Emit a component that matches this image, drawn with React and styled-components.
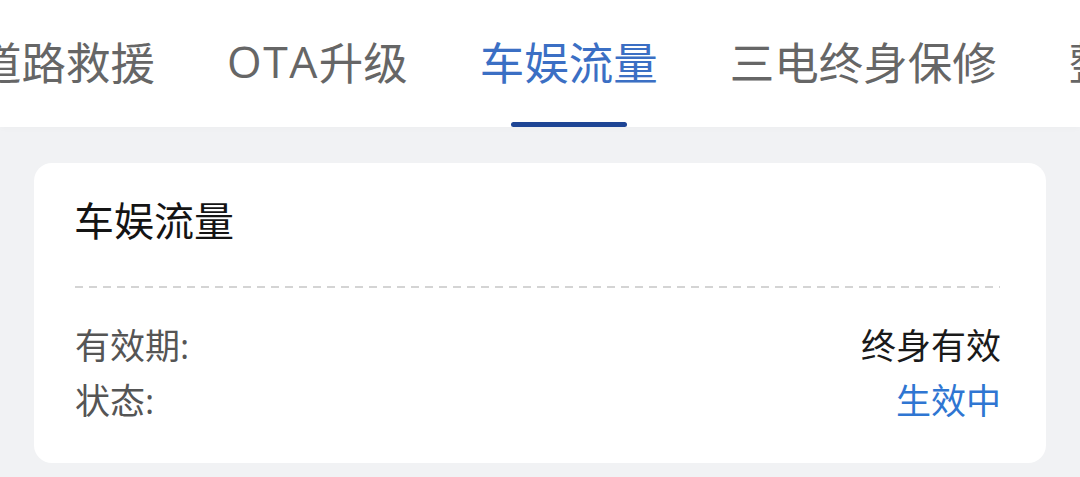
import React, { useState } from 'react';
import styled, { createGlobalStyle } from 'styled-components';

const GlobalStyle = createGlobalStyle`
  html, body {
    margin: 0;
    padding: 0;
    background: #f1f2f4;
  }
  body {
    font-family: "Open Sans", "Noto Sans CJK SC", sans-serif;
  }
`;

const Page = styled.div`
  width: 1080px;
  height: 477px;
  overflow: hidden;
  background: #f1f2f4;
`;

const TabBar = styled.div`
  height: 127px;
  background: #fff;
  overflow: hidden;
  box-shadow: 0 2px 6px rgba(0, 0, 0, 0.02);
`;

const TabTrack = styled.div`
  display: flex;
  height: 100%;
  margin-left: -59px;
  white-space: nowrap;
`;

const Tab = styled.div`
  position: relative;
  flex: none;
  display: flex;
  align-items: center;
  padding: 0 36px 7px;
  font-size: 44.5px;
  color: ${p => (p.$active ? '#3b6fc4' : '#666')};
  cursor: pointer;
`;

const Latin = styled.span`
  letter-spacing: 1.5px;
`;

const Indicator = styled.span`
  position: absolute;
  left: 50%;
  bottom: 0;
  width: 116px;
  height: 5px;
  margin-left: -58px;
  border-radius: 3px;
  background: #1e4595;
`;

const Card = styled.div`
  margin: 36px 34px 0;
  padding: 30px 42px 37px;
  background: #fff;
  border-radius: 18px;
`;

const Title = styled.div`
  font-size: 40px;
  line-height: 56px;
  color: #141414;
  margin-left: -2px;
`;

const Dashed = styled.div`
  height: 2px;
  margin: 37px 4px 28px -1px;
  background: repeating-linear-gradient(to right, #d4d4d4 0 8px, transparent 8px 14px);
`;

const Row = styled.div`
  display: flex;
  justify-content: space-between;
  align-items: center;
  height: 55px;
  font-size: 35px;
`;

const Label = styled.span`
  color: #555;
  margin-left: -1px;
`;

const Value = styled.span`
  color: ${p => p.$color || '#1a1a1a'};
  margin-right: 3px;
`;

const tabs = ['道路救援', 'OTA升级', '车娱流量', '三电终身保修', '整车质保'];

// keep the latin part of a tab name slightly tracked like the app font
const renderName = name => {
  const m = name.match(/^([A-Za-z]+)(.*)$/);
  if (!m) return name;
  return (
    <>
      <Latin>{m[1]}</Latin>
      {m[2]}
    </>
  );
};

function App() {
  const [active, setActive] = useState(2);

  return (
    <Page>
      <GlobalStyle />
      <TabBar>
        <TabTrack>
          {tabs.map((t, i) => (
            <Tab key={t} $active={i === active} onClick={() => setActive(i)}>
              {renderName(t)}
              {i === active && <Indicator />}
            </Tab>
          ))}
        </TabTrack>
      </TabBar>
      <Card>
        <Title>车娱流量</Title>
        <Dashed />
        <Row>
          <Label>有效期:</Label>
          <Value>终身有效</Value>
        </Row>
        <Row>
          <Label>状态:</Label>
          <Value $color="#2f76d2">生效中</Value>
        </Row>
      </Card>
    </Page>
  );
}

export default App;
